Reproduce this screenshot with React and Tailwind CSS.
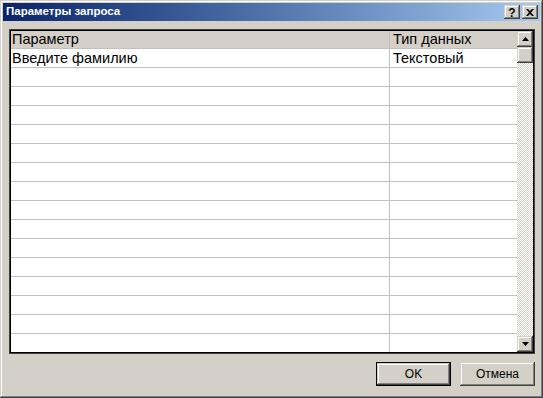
const raised =
  "shadow-[inset_-1px_-1px_0_#404040,inset_1px_1px_0_#d4d0c8,inset_-2px_-2px_0_#808080,inset_2px_2px_0_#ffffff]";

function ScrollButton({ down }) {
  return (
    <div className={`w-[16px] h-[16px] bg-[#d4d0c8] flex items-center justify-center ${raised}`}>
      <svg width="7" height="4" viewBox="0 0 7 4">
        {down ? <path d="M0 0h7L3.5 4z" fill="#000" /> : <path d="M0 4h7L3.5 0z" fill="#000" />}
      </svg>
    </div>
  );
}

function CaptionButton({ children }) {
  return (
    <div className={`w-[16px] h-[14px] bg-[#d4d0c8] flex items-center justify-center ${raised}`}>
      {children}
    </div>
  );
}

export default function App() {
  const rows = Array.from({ length: 16 });

  return (
    <div
      className={`w-[543px] h-[398px] bg-[#d4d0c8] p-[3px] flex flex-col ${raised} font-['Liberation_Sans',Arial,sans-serif]`}
    >
      {/* title bar */}
      <div className="h-[18px] flex items-center justify-between pl-[3px] pr-[2px] bg-gradient-to-r from-[#0a246a] to-[#a6caf0]">
        <span className="text-white font-bold text-[11.5px] leading-none">Параметры запроса</span>
        <div className="flex items-center">
          <CaptionButton>
            <span className="text-[12px] font-bold leading-none text-black mt-[1px]">?</span>
          </CaptionButton>
          <div className="w-[2px]" />
          <CaptionButton>
            <svg width="8" height="7" viewBox="0 0 8 7">
              <path d="M0 0h2l2 2 2-2h2L5 3.5 8 7H6L4 5 2 7H0l3-3.5z" fill="#000" />
            </svg>
          </CaptionButton>
        </div>
      </div>

      {/* grid */}
      <div className="mt-[8px] ml-[6px] mr-[5px] h-[325px] border border-[#404040] shadow-[inset_0_0_0_1px_#000] p-px flex bg-white">
        <div className="flex-1 flex flex-col overflow-hidden text-[14.5px] text-black">
          <div className="h-[18px] flex bg-[#d4d0c8] border-b border-[#c0c0c0]">
            <div className="w-[379px] pl-[1px] pt-[1px] border-r border-[#c0c0c0] flex items-center">Параметр</div>
            <div className="flex-1 pl-[3px] pt-[1px] flex items-center">Тип данных</div>
          </div>
          <div className="h-[19px] flex border-b border-[#c0c0c0]">
            <div className="w-[379px] pl-[1px] pt-[1px] border-r border-[#c0c0c0] flex items-center">Введите фамилию</div>
            <div className="flex-1 pl-[3px] pt-[1px] flex items-center">Текстовый</div>
          </div>
          {rows.map((_, i) => (
            <div key={i} className="h-[19px] shrink-0 flex border-b border-[#c0c0c0]">
              <div className="w-[379px] border-r border-[#c0c0c0]" />
              <div className="flex-1" />
            </div>
          ))}
        </div>
        <div className="w-[16px] flex flex-col">
          <ScrollButton />
          <div className={`w-[16px] h-[16px] bg-[#d4d0c8] ${raised}`} />
          <div className="flex-1 bg-[repeating-conic-gradient(#d4d0c8_0_25%,#ffffff_0_50%)] bg-[length:2px_2px]" />
          <ScrollButton down />
        </div>
      </div>

      {/* buttons */}
      <div className="flex justify-end gap-[9px] mt-[8px] mr-[5px] text-[12px] text-black">
        <div className="w-[75px] h-[24px] border border-black">
          <div className={`w-full h-full bg-[#d4d0c8] flex items-center justify-center ${raised}`}>OK</div>
        </div>
        <div className={`w-[75px] h-[24px] bg-[#d4d0c8] flex items-center justify-center ${raised}`}>Отмена</div>
      </div>
    </div>
  );
}
